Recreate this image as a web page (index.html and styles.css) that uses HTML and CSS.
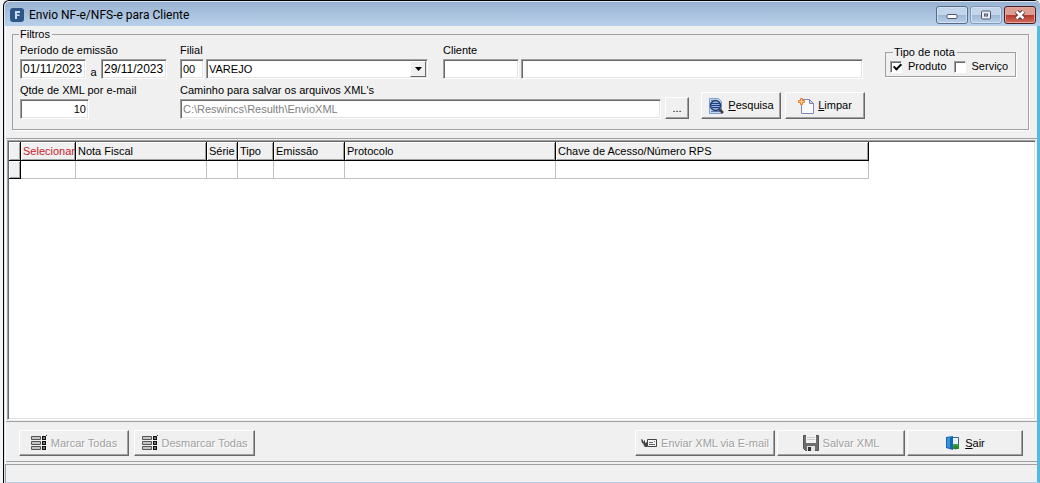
FILE: index.html
```html
<!DOCTYPE html>
<html lang="pt-BR">
  <head>
    <meta charset="UTF-8" />
    <meta name="viewport" content="width=device-width, initial-scale=1.0" />
    <title>Envio NF-e/NFS-e para Cliente</title>
    <link rel="stylesheet" href="styles.css" />
  </head>
  <body>
    <div class="window">
      <header class="titlebar">
        <svg class="app-icon" width="14" height="14" viewBox="0 0 14 14">
          <rect x="0" y="0" width="14" height="14" rx="3" fill="#2f5689" />
          <path d="M5 3h5v2H7v1.500h2.500v1.500H7v3H5z" fill="#c9dcf2" />
        </svg>
        <h1>Envio NF-e/NFS-e para Cliente</h1>
        <div class="caption-buttons">
          <button type="button" class="caption" aria-label="Minimizar">
            <svg width="12" height="10" viewBox="0 0 12 10">
              <rect x="1" y="4.500" width="10" height="4" rx="1" fill="#fff" stroke="#535666" />
            </svg>
          </button>
          <button type="button" class="caption faded" aria-label="Maximizar">
            <svg width="12" height="10" viewBox="0 0 12 10">
              <rect x="1.500" y="1" width="9" height="8" rx="1" fill="#e8eef6" stroke="#535666" />
              <rect x="4.500" y="4" width="3" height="2" fill="#b5cbe5" stroke="#535666" />
            </svg>
          </button>
          <button type="button" class="caption close" aria-label="Fechar">
            <svg width="12" height="10" viewBox="0 0 12 10">
              <path d="M2.500 1.500L9.500 8.500M9.500 1.500L2.500 8.500" stroke="#5b3038" stroke-width="4.500" />
              <path d="M2.500 1.500L9.500 8.500M9.500 1.500L2.500 8.500" stroke="#fff" stroke-width="2.600" />
            </svg>
          </button>
        </div>
      </header>

      <main class="content">
        <form class="filter-panel">
          <fieldset class="group filters">
            <legend>Filtros</legend>
            <div class="filter-row">
              <div class="field period">
                <label for="dateFrom">Período de emissão</label>
                <div class="inputs">
                  <input type="text" id="dateFrom" class="date" value="01/11/2023" />
                  <label for="dateTo">a</label>
                  <input type="text" id="dateTo" class="date" value="29/11/2023" />
                </div>
              </div>
              <div class="field branch">
                <label for="branchCode">Filial</label>
                <div class="inputs">
                  <input type="text" id="branchCode" class="code" value="00" />
                  <span class="combo">
                    <select id="branch" aria-label="Filial">
                      <option>VAREJO</option>
                    </select>
                    <span class="combo-arrow">
                      <svg width="7" height="4" viewBox="0 0 7 4"><path d="M0 0h7L3.500 4z" /></svg>
                    </span>
                  </span>
                </div>
              </div>
              <div class="field client">
                <label for="clientCode">Cliente</label>
                <div class="inputs">
                  <input type="text" id="clientCode" class="client-code" />
                  <input type="text" class="grow" aria-label="Nome do cliente" />
                </div>
              </div>
              <fieldset class="group note-type">
                <legend>Tipo de nota</legend>
                <label><input type="checkbox" checked />Produto</label>
                <label><input type="checkbox" />Serviço</label>
              </fieldset>
            </div>

            <div class="filter-row second">
              <div class="field quantity">
                <label for="quantity">Qtde de XML por e-mail</label>
                <input type="text" id="quantity" value="10" />
              </div>
              <div class="field path">
                <label for="path">Caminho para salvar os arquivos XML's</label>
                <input type="text" id="path" value="C:\Reswincs\Resulth\EnvioXML" disabled />
              </div>
              <button type="button" class="btn browse" aria-label="Escolher pasta">...</button>
              <button type="button" class="btn action search">
                <svg width="16" height="16" viewBox="0 0 16 16">
                  <path d="M1.500.5h9l3 3v12h-12z" fill="#c3d9f6" stroke="#7d9cc9" />
                  <path d="M3 2.500h6M3 13.500h9" stroke="#5b7fbc" />
                  <circle cx="7.500" cy="7.500" r="5" fill="#8fb2e6" stroke="#2c3d62" stroke-width="1.500" />
                  <path d="M3 5.500h9M3 7.500h9M4 9.500h7" stroke="#1d3f80" />
                  <path d="M11 11l4 4" stroke="#3d3d46" stroke-width="2.500" />
                </svg>
                <span><u>P</u>esquisa</span>
              </button>
              <button type="reset" class="btn action clear">
                <svg width="16" height="16" viewBox="0 0 16 16">
                  <path d="M3.500 1.500h8l4 4v10h-12z" fill="#fafbff" stroke="#8385b8" />
                  <path d="M11.500 1.500v4h4z" fill="#cfd2ee" stroke="#8385b8" />
                  <path d="M2.500.5h2v2h2v2h-2v2h-2v-2h-2v-2h2z" fill="#ffd08a" stroke="#ee7b32" />
                </svg>
                <span><u>L</u>impar</span>
              </button>
            </div>
          </fieldset>
        </form>

        <section class="grid">
          <table>
            <colgroup>
              <col class="col-mark" />
              <col class="col-select" />
              <col class="col-note" />
              <col class="col-series" />
              <col class="col-type" />
              <col class="col-date" />
              <col class="col-protocol" />
              <col class="col-key" />
            </colgroup>
            <thead>
              <tr>
                <th></th>
                <th class="red">Selecionar</th>
                <th>Nota Fiscal</th>
                <th>Série</th>
                <th>Tipo</th>
                <th>Emissão</th>
                <th>Protocolo</th>
                <th>Chave de Acesso/Número RPS</th>
              </tr>
            </thead>
            <tbody>
              <tr>
                <th></th>
                <td></td>
                <td></td>
                <td></td>
                <td></td>
                <td></td>
                <td></td>
                <td></td>
              </tr>
            </tbody>
          </table>
        </section>

        <div class="toolbar">
          <button type="button" class="btn mark" disabled>
            <svg width="16" height="16" viewBox="0 0 16 16">
              <path d="M.5 1.500h9v3h-9zM.5 6.500h9v3h-9zM.5 11.500h9v3h-9z" fill="#c4c4c4" stroke="#555" />
              <path d="M11 1h4v4h-4zM11 6h4v4h-4zM11 11h4v4h-4z" fill="#111" />
              <path d="M12 3h2M12 8h2M12 13h2" stroke="#ddd" />
              <path d="M14 2l2-2" stroke="#333" />
            </svg>
            <span>Marcar Todas</span>
          </button>
          <button type="button" class="btn unmark" disabled>
            <svg width="16" height="16" viewBox="0 0 16 16">
              <path d="M.5 1.500h9v3h-9zM.5 6.500h9v3h-9zM.5 11.500h9v3h-9z" fill="#c4c4c4" stroke="#555" />
              <path d="M11 1h4v4h-4zM11 6h4v4h-4zM11 11h4v4h-4z" fill="#111" />
              <path d="M12 3h2M12 8h2M12 13h2" stroke="#ddd" />
              <path d="M14 2l2-2" stroke="#333" />
            </svg>
            <span>Desmarcar Todas</span>
          </button>
          <div class="spacer"></div>
          <button type="button" class="btn send" disabled>
            <svg width="16" height="16" viewBox="0 0 16 16">
              <path d="M6.500 4.500h9v7h-9z" fill="#f4f4f4" stroke="#444" />
              <path d="M8 7.500h4M8 9.500h6M13 6.500h1" stroke="#666" />
              <path d="M0 4l2 1v2l2-2v3l2-1v5H3l1-1-2-1 1-1-2-1z" fill="#444" />
            </svg>
            <span>Enviar XML via E-mail</span>
          </button>
          <button type="button" class="btn save" disabled>
            <svg width="16" height="16" viewBox="0 0 16 16">
              <path d="M.5.5h15v15h-13l-2-2z" fill="#6d6d6d" stroke="#555" />
              <path d="M3 0h10v8H3z" fill="#f2f2f2" />
              <path d="M4 2.500h8M4 4.500h8" stroke="#ccc" />
              <path d="M4 11h8v5H4z" fill="#e2e2e2" />
              <path d="M5 12h3v4H5z" fill="#333" />
            </svg>
            <span>Salvar XML</span>
          </button>
          <button type="button" class="btn exit">
            <svg width="16" height="16" viewBox="0 0 16 16">
              <path d="M6.500 2.500h7v11h-7z" fill="#e4f3fb" stroke="#47647c" />
              <path d="M7 9h6v4H7z" fill="#46ad3c" />
              <path d="M1 2l7-1v14l-7-2z" fill="#1767b5" />
              <path d="M2 3l3-1v11l-3-1z" fill="#3a92dc" />
              <path d="M8 12l3-3v2h3v3h-3v1z" fill="#258c24" />
            </svg>
            <span><u>S</u>air</span>
          </button>
        </div>
      </main>
      <footer class="statusbar"></footer>
    </div>
  </body>
</html>
```
FILE: styles.css
```css
* {
  box-sizing: border-box;
}
body {
  margin: 0;
  background: #f4f4f4;
  color: #000;
  font-family: "Liberation Sans", Arial, sans-serif;
  font-size: 11px;
  line-height: 13px;
}
button,
input,
select {
  margin: 0;
  font: inherit;
  color: inherit;
}

/* window frame */
.window {
  display: flex;
  flex-direction: column;
  min-height: 100vh;
  margin-left: 3px;
  padding-left: 1px;
  border: solid #000;
  border-width: 1px 0 0 1px;
  border-top-left-radius: 6px;
  border-top-right-radius: 6px;
  background: #d5e3f2;
}
.titlebar {
  display: flex;
  align-items: center;
  height: 25px;
  padding: 2px 4px 0 5px;
  border-top: 1px solid #dce8f5;
  border-radius: 5px 5px 0 0;
  background: linear-gradient(#98b2d1, #b9d1ea);
}
.titlebar h1 {
  flex: 1;
  margin: 0 0 0 5px;
  font: 12px/16px Roboto, sans-serif;
}
.caption-buttons {
  display: flex;
  gap: 2px;
}
.caption {
  display: flex;
  align-items: center;
  justify-content: center;
  width: 32px;
  height: 18px;
  padding: 0;
  border: 1px solid #566b86;
  border-radius: 3px;
  background: linear-gradient(#c3d5ea 50%, #9cb7d6 50%, #b9d0ea);
  box-shadow: inset 0 0 0 1px #d3e2f2;
}
.caption.faded {
  border-color: #8299b8;
}
.caption.close {
  border-color: #4c1d27;
  background: linear-gradient(#dc9e93 50%, #b7352a 50%, #d2705c);
  box-shadow: inset 0 0 0 1px #e2a99f;
}
.content {
  flex: 1;
  display: flex;
  flex-direction: column;
  padding-bottom: 2px;
  border-left: 1px solid #fff;
  border-right: 3px solid #56b9de;
  background: #f0f0f0;
}

/* filters */
.filter-panel {
  padding: 2px 8px 8px 6px;
  border-bottom: 1px solid #a0a0a0;
}
.group {
  min-width: 0;
  margin: 0;
  border: 1px solid #a0a0a0;
  box-shadow: 1px 1px 0 #fff;
}
.filters {
  padding: 3px 12px 10px 7px;
}
.group legend {
  padding: 0 2px 0 1px;
}
.filters > legend {
  margin-left: -1px;
}
.filter-row {
  display: flex;
  align-items: flex-end;
}
.filter-row.second {
  margin-top: 5px;
  padding-right: 151px;
}
.field {
  display: flex;
  flex-direction: column;
  gap: 2px;
}
.inputs {
  display: flex;
  align-items: flex-end;
  gap: 2px;
}
.period {
  width: 147px;
  margin-right: 13px;
}
.period .inputs {
  justify-content: space-between;
}
.branch {
  width: 248px;
  margin-right: 15px;
}
.client,
.path {
  flex: 1;
}
input[type="text"],
select {
  width: 100%;
  height: 20px;
  padding: 0 2px;
  border: 1px solid;
  border-color: #a0a0a0 #fff #fff #a0a0a0;
  border-radius: 0;
  background: #fff;
  box-shadow: inset 1px 1px 0 #696969, inset -1px -1px 0 #e3e3e3;
}
input[type="text"].date {
  width: 66px;
  font-size: 12px;
}
input[type="text"].code {
  width: 24px;
}
input[type="text"].client-code {
  width: 76px;
}
input[type="text"].grow {
  flex: 1;
}
input[type="text"]:disabled {
  color: #808080;
}
.combo {
  position: relative;
  flex: 1;
}
select {
  display: block;
  appearance: none;
}
.combo-arrow {
  position: absolute;
  top: 2px;
  right: 2px;
  display: flex;
  align-items: center;
  justify-content: center;
  width: 16px;
  height: 16px;
  border: 1px solid;
  border-color: #fff #696969 #696969 #fff;
  background: #f0f0f0;
  pointer-events: none;
}
.note-type {
  display: flex;
  gap: 7px;
  width: 131px;
  margin: 0 0 2px 22px;
  padding: 1px 4px 3px;
}
.note-type legend {
  margin-left: 3px;
}
.note-type label {
  display: flex;
  align-items: center;
  gap: 6px;
}
input[type="checkbox"] {
  appearance: none;
  width: 12px;
  height: 12px;
  border: 1px solid;
  border-color: #a0a0a0 #fff #fff #a0a0a0;
  background: #fff;
  box-shadow: inset 1px 1px 0 #696969;
}
input[type="checkbox"]:checked::before {
  content: "";
  display: block;
  width: 3px;
  height: 6px;
  margin: 0 0 0 4px;
  border: solid #000;
  border-width: 0 2px 2px 0;
  transform: rotate(45deg);
}
.quantity {
  width: 160px;
}
.quantity input[type="text"] {
  width: 69px;
  text-align: right;
}

/* buttons */
.btn {
  display: flex;
  align-items: center;
  justify-content: center;
  gap: 4px;
  height: 26px;
  padding: 0;
  border: 1px solid;
  border-color: #fff #696969 #696969 #fff;
  background: #f0f0f0;
  box-shadow: inset -1px -1px 0 #a0a0a0;
  white-space: nowrap;
}
.btn:disabled {
  color: #a0a0a0;
  text-shadow: 1px 1px 0 #fff;
}
.browse {
  width: 24px;
  height: 22px;
  margin: 0 12px 0 4px;
}
.action {
  width: 80px;
  height: 27px;
}
.clear {
  margin-left: 4px;
}

/* invoice list */
.grid {
  flex: 1;
  margin: 1px;
  padding: 1px;
  border: 1px solid;
  border-color: #a0a0a0 #fff #fff #a0a0a0;
  background: #fff;
  box-shadow: inset 1px 1px 0 #696969, inset -1px -1px 0 #e3e3e3;
}
table {
  width: 860px;
  table-layout: fixed;
  border-collapse: separate;
  border-spacing: 0;
}
th,
td {
  height: 18px;
  padding: 0 2px;
  border: solid #c0c0c0;
  border-width: 0 1px 1px 0;
  text-align: left;
  font-weight: normal;
  white-space: nowrap;
}
th {
  height: 19px;
  border-color: #000;
  background: #f0f0f0;
  box-shadow: inset 1px 1px 0 #fff, inset -1px -1px 0 #a0a0a0;
}
tbody th {
  height: 18px;
}
.red {
  color: #c8202c;
}
.col-mark {
  width: 12px;
}
.col-select {
  width: 55px;
}
.col-note {
  width: 131px;
}
.col-series {
  width: 31px;
}
.col-type {
  width: 36px;
}
.col-date {
  width: 71px;
}
.col-protocol {
  width: 211px;
}
.col-key {
  width: 313px;
}

.toolbar {
  display: flex;
  gap: 2px;
  padding: 8px 14px 5px 13px;
  border: solid #a0a0a0;
  border-width: 1px 0;
}
.spacer {
  flex: 1;
}
.mark {
  width: 110px;
  margin-right: 3px;
}
.unmark {
  width: 121px;
}
.send {
  width: 140px;
}
.save {
  width: 128px;
}
.exit {
  width: 116px;
}
.statusbar {
  height: 19px;
  border: solid #a0a0a0;
  border-width: 1px 3px 1px 1px;
  border-right-color: #56b9de;
  border-bottom-color: #b5cde6;
  background: #f0f0f0;
}
```
